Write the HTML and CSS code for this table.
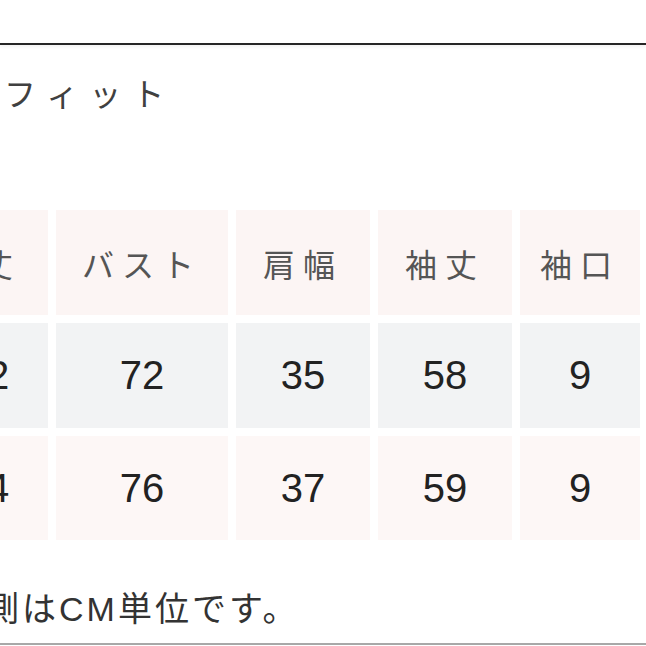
FILE: index.html
```html
<!DOCTYPE html>
<html lang="ja">
<head>
<meta charset="utf-8">
<link rel="stylesheet" href="styles.css">
</head>
<body>
<div class="page">
  <div class="top"></div>
  <div class="title">フィット</div>
  <div class="table">
    <div class="cell head first">着丈</div>
    <div class="cell head">バスト</div>
    <div class="cell head">肩幅</div>
    <div class="cell head">袖丈</div>
    <div class="cell head">袖口</div>

    <div class="cell grey">62</div>
    <div class="cell grey">72</div>
    <div class="cell grey">35</div>
    <div class="cell grey">58</div>
    <div class="cell grey">9</div>

    <div class="cell pink">64</div>
    <div class="cell pink">76</div>
    <div class="cell pink">37</div>
    <div class="cell pink">59</div>
    <div class="cell pink">9</div>
  </div>
  <div class="note">計測はCM単位です。</div>
  <div class="bottom"></div>
</div>
</body>
</html>
```

FILE: styles.css
```css
html, body {
  margin: 0;
  padding: 0;
  background: #ffffff;
  overflow: hidden;
}

.page {
  width: 646px;
  height: 646px;
  overflow: hidden;
  font-family: "Liberation Sans", "Noto Sans CJK JP", sans-serif;
  color: #333;
}

.top {
  height: 43px;
  border-bottom: 2px solid #262626;
  box-shadow: 0 2px 3px rgba(0, 0, 0, 0.05);
}

.title {
  margin-top: 30px;
  padding-left: 4px;
  font-size: 32px;
  line-height: 40px;
  letter-spacing: 11px;
  color: #404040;
}

.table {
  margin-top: 95px;
  margin-left: -74px;
  display: grid;
  grid-template-columns: 122px 172px 134px 134px 120px;
  grid-template-rows: 105px 105px 104px;
  gap: 8px;
}

.cell {
  display: flex;
  align-items: center;
  justify-content: center;
  font-size: 40px;
  color: #222;
}

.head {
  background: #fcf5f4;
  font-size: 32px;
  letter-spacing: 8px;
  color: #555;
}

.first {
  padding-right: 12px;
}

.grey {
  background: #f2f3f4;
}

.pink {
  background: #fdf7f6;
}

.note {
  margin-top: 49px;
  margin-left: -52px;
  font-size: 34px;
  line-height: 40px;
  letter-spacing: 3px;
  color: #333;
}

.bottom {
  margin-top: 14px;
  height: 2px;
  background: #a8a8a8;
}
```
